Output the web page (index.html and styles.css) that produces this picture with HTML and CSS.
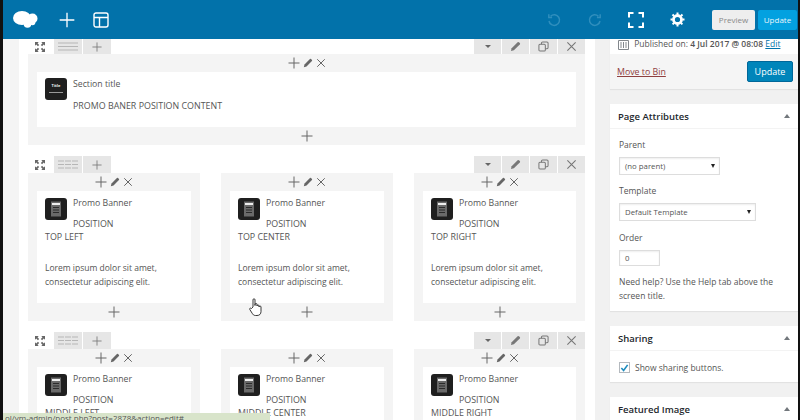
FILE: index.html
```html
<!DOCTYPE html>
<html lang="en">
<head>
    <meta charset="UTF-8">
    <title>Edit Page</title>
    <link rel="stylesheet" href="styles.css">
</head>
<body>
    <svg class="sprite" width="0" height="0">
        <symbol id="i-plus" viewBox="0 0 12 12"><path d="M6 .5v11M.5 6h11" fill="none" stroke="currentColor" stroke-width="1"/></symbol>
        <symbol id="i-close" viewBox="0 0 12 12"><path d="M1.500 1.500l9 9M10.500 1.500l-9 9" fill="none" stroke="currentColor" stroke-width="1.200"/></symbol>
        <symbol id="i-pencil" viewBox="0 0 12 12"><path d="M1 11l.8-3.200L8.300 1.300a1 1 0 0 1 1.400 0l1 1a1 1 0 0 1 0 1.400L4.200 10.200z" fill="currentColor"/></symbol>
        <symbol id="i-copy" viewBox="0 0 12 12"><g fill="none" stroke="currentColor" stroke-width="1.100"><rect x="1" y="3.500" width="7" height="7.500" rx="1.200"/><path d="M3.800 3.500V2.200A1.200 1.200 0 0 1 5 1h4.800A1.200 1.200 0 0 1 11 2.200v5A1.200 1.200 0 0 1 9.800 8.400H8"/></g></symbol>
        <symbol id="i-expand" viewBox="0 0 12 12"><g fill="currentColor"><path d="M0 0h4.500L3 1.500l2 2L3.500 5l-2-2L0 4.500zM12 0v4.500L10.500 3l-2 2L7 3.500l2-2L7.500 0zM0 12V7.500L1.500 9l2-2L5 8.500l-2 2L4.500 12zM12 12H7.500L9 10.500l-2-2L8.500 7l2 2L12 7.500z"/></g></symbol>
        <symbol id="i-promo" viewBox="0 0 22 22"><rect width="22" height="22" rx="3" fill="#1f1f1f"/><rect x="6" y="3.500" width="10" height="15" fill="#6a6a6a"/><rect x="7" y="5" width="8" height="2" fill="#eee"/><path d="M8 9.500h6M8 12h6M8 14.500h6" stroke="#2b2b2b" stroke-width="1"/></symbol>
    </svg>

    <div class="app">
        <!-- Top bar -->
        <header class="topbar">
            <svg class="logo" width="25" height="18" viewBox="0 0 25 18"><g fill="#fff"><ellipse cx="9" cy="7" rx="9" ry="7"/><circle cx="19.500" cy="7.500" r="5"/><circle cx="14.500" cy="13" r="3.800"/><circle cx="19.500" cy="11.500" r="2.800"/></g></svg>
            <svg class="bar-plus" width="16" height="16"><use href="#i-plus"/></svg>
            <svg class="bar-layout" width="16" height="16" viewBox="0 0 16 16"><g fill="none" stroke="#fff" stroke-width="1.400"><rect x="1" y="1" width="14" height="14" rx="2"/><path d="M1 5.500h14M6.500 5.500V15"/></g></svg>

            <svg class="bar-undo dim" width="14" height="14" viewBox="0 0 14 14"><path d="M3.600 3.200A5.300 5.300 0 1 1 2 8M1.800 1.200v3.300h3.300" fill="none" stroke="currentColor" stroke-width="1.500"/></svg>
            <svg class="bar-redo dim" width="14" height="14" viewBox="0 0 14 14"><path d="M10.400 3.200A5.300 5.300 0 1 0 12 8M12.200 1.200v3.300H8.900" fill="none" stroke="currentColor" stroke-width="1.500"/></svg>
            <svg class="bar-full" width="16" height="16" viewBox="0 0 16 16"><path d="M1 5.500V1h4.500M10.500 1H15v4.500M15 10.500V15h-4.500M5.500 15H1v-4.500" fill="none" stroke="#fff" stroke-width="2"/></svg>
            <svg class="bar-gear" width="15" height="15" viewBox="0 0 15 15"><circle cx="7.500" cy="7.500" r="4" fill="none" stroke="#fff" stroke-width="2.800"/><path d="M7.500 .5v14M.5 7.500h14M2.500 2.500l10 10M12.500 2.500l-10 10" stroke="#fff" stroke-width="2" stroke-dasharray="2.200 9.600"/></svg>
            <button class="btn-preview">Preview</button>
            <button class="btn-update">Update</button>
        </header>

        <div class="workspace">
            <div class="strip"></div>

            <!-- Builder -->
            <main class="builder">
                <section class="row row-first">
                    <div class="row-bar">
                        <svg class="row-expand" width="10" height="10"><use href="#i-expand"/></svg>
                        <span class="bar-btn">
                            <svg width="20" height="9" viewBox="0 0 20 9"><path d="M0 1h20M0 4.500h20M0 8h20" stroke="#aaa" stroke-width=".8"/></svg>
                        </span>
                        <span class="bar-btn"><svg width="10" height="10"><use href="#i-plus"/></svg></span>
                        <div class="row-tools">
                            <span class="bar-btn tool"><i class="caret"></i></span>
                            <span class="bar-btn tool"><svg><use href="#i-pencil"/></svg></span>
                            <span class="bar-btn tool"><svg><use href="#i-copy"/></svg></span>
                            <span class="bar-btn tool"><svg><use href="#i-close"/></svg></span>
                        </div>
                    </div>
                    <div class="block">
                        <div class="block-tools">
                            <svg width="12" height="12"><use href="#i-plus"/></svg>
                            <svg width="10" height="10"><use href="#i-pencil"/></svg>
                            <svg width="10" height="10"><use href="#i-close"/></svg>
                        </div>
                        <div class="card card-wide">
                            <div class="thumb-title"><span>Title</span></div>
                            <div class="card-title">Section title</div>
                            <div class="card-line">PROMO BANER POSITION CONTENT</div>
                        </div>
                        <div class="block-add"><svg width="12" height="12"><use href="#i-plus"/></svg></div>
                    </div>
                </section>

                <section class="row">
                    <div class="row-bar">
                        <svg class="row-expand" width="10" height="10"><use href="#i-expand"/></svg>
                        <span class="bar-btn">
                            <svg width="20" height="9" viewBox="0 0 20 9"><path d="M0 1h6M7 1h6M14 1h6M0 4.500h6M7 4.500h6M14 4.500h6M0 8h6M7 8h6M14 8h6" stroke="#aaa" stroke-width=".8"/></svg>
                        </span>
                        <span class="bar-btn"><svg width="10" height="10"><use href="#i-plus"/></svg></span>
                        <div class="row-tools">
                            <span class="bar-btn tool"><i class="caret"></i></span>
                            <span class="bar-btn tool"><svg><use href="#i-pencil"/></svg></span>
                            <span class="bar-btn tool"><svg><use href="#i-copy"/></svg></span>
                            <span class="bar-btn tool"><svg><use href="#i-close"/></svg></span>
                        </div>
                    </div>
                    <div class="cols">
                        <div class="block">
                            <div class="block-tools">
                                <svg width="12" height="12"><use href="#i-plus"/></svg>
                                <svg width="10" height="10"><use href="#i-pencil"/></svg>
                                <svg width="10" height="10"><use href="#i-close"/></svg>
                            </div>
                            <div class="card">
                                <svg class="thumb" width="22" height="22"><use href="#i-promo"/></svg>
                                <div class="card-title">Promo Banner</div>
                                <div class="card-line">POSITION<br>TOP LEFT</div>
                                <p class="card-text">Lorem ipsum dolor sit amet,<br>consectetur adipiscing elit.</p>
                            </div>
                            <div class="block-add"><svg width="12" height="12"><use href="#i-plus"/></svg></div>
                        </div>
                        <div class="block">
                            <div class="block-tools">
                                <svg width="12" height="12"><use href="#i-plus"/></svg>
                                <svg width="10" height="10"><use href="#i-pencil"/></svg>
                                <svg width="10" height="10"><use href="#i-close"/></svg>
                            </div>
                            <div class="card">
                                <svg class="thumb" width="22" height="22"><use href="#i-promo"/></svg>
                                <div class="card-title">Promo Banner</div>
                                <div class="card-line">POSITION<br>TOP CENTER</div>
                                <p class="card-text">Lorem ipsum dolor sit amet,<br>consectetur adipiscing elit.</p>
                            </div>
                            <div class="block-add"><svg width="12" height="12"><use href="#i-plus"/></svg></div>
                        </div>
                        <div class="block">
                            <div class="block-tools">
                                <svg width="12" height="12"><use href="#i-plus"/></svg>
                                <svg width="10" height="10"><use href="#i-pencil"/></svg>
                                <svg width="10" height="10"><use href="#i-close"/></svg>
                            </div>
                            <div class="card">
                                <svg class="thumb" width="22" height="22"><use href="#i-promo"/></svg>
                                <div class="card-title">Promo Banner</div>
                                <div class="card-line">POSITION<br>TOP RIGHT</div>
                                <p class="card-text">Lorem ipsum dolor sit amet,<br>consectetur adipiscing elit.</p>
                            </div>
                            <div class="block-add"><svg width="12" height="12"><use href="#i-plus"/></svg></div>
                        </div>
                    </div>
                </section>

                <section class="row">
                    <div class="row-bar">
                        <svg class="row-expand" width="10" height="10"><use href="#i-expand"/></svg>
                        <span class="bar-btn">
                            <svg width="20" height="9" viewBox="0 0 20 9"><path d="M0 1h6M7 1h6M14 1h6M0 4.500h6M7 4.500h6M14 4.500h6M0 8h6M7 8h6M14 8h6" stroke="#aaa" stroke-width=".8"/></svg>
                        </span>
                        <span class="bar-btn"><svg width="10" height="10"><use href="#i-plus"/></svg></span>
                        <div class="row-tools">
                            <span class="bar-btn tool"><i class="caret"></i></span>
                            <span class="bar-btn tool"><svg><use href="#i-pencil"/></svg></span>
                            <span class="bar-btn tool"><svg><use href="#i-copy"/></svg></span>
                            <span class="bar-btn tool"><svg><use href="#i-close"/></svg></span>
                        </div>
                    </div>
                    <div class="cols">
                        <div class="block">
                            <div class="block-tools">
                                <svg width="12" height="12"><use href="#i-plus"/></svg>
                                <svg width="10" height="10"><use href="#i-pencil"/></svg>
                                <svg width="10" height="10"><use href="#i-close"/></svg>
                            </div>
                            <div class="card">
                                <svg class="thumb" width="22" height="22"><use href="#i-promo"/></svg>
                                <div class="card-title">Promo Banner</div>
                                <div class="card-line">POSITION<br>MIDDLE LEFT</div>
                            </div>
                        </div>
                        <div class="block">
                            <div class="block-tools">
                                <svg width="12" height="12"><use href="#i-plus"/></svg>
                                <svg width="10" height="10"><use href="#i-pencil"/></svg>
                                <svg width="10" height="10"><use href="#i-close"/></svg>
                            </div>
                            <div class="card">
                                <svg class="thumb" width="22" height="22"><use href="#i-promo"/></svg>
                                <div class="card-title">Promo Banner</div>
                                <div class="card-line">POSITION<br>MIDDLE CENTER</div>
                            </div>
                        </div>
                        <div class="block">
                            <div class="block-tools">
                                <svg width="12" height="12"><use href="#i-plus"/></svg>
                                <svg width="10" height="10"><use href="#i-pencil"/></svg>
                                <svg width="10" height="10"><use href="#i-close"/></svg>
                            </div>
                            <div class="card">
                                <svg class="thumb" width="22" height="22"><use href="#i-promo"/></svg>
                                <div class="card-title">Promo Banner</div>
                                <div class="card-line">POSITION<br>MIDDLE RIGHT</div>
                            </div>
                        </div>
                    </div>
                </section>
            </main>

            <!-- Sidebar -->
            <aside class="sidebar">
                <div class="box box-publish">
                    <div class="published">
                        <svg width="11" height="11" viewBox="0 0 11 11"><path d="M.5 1.500h10v9H.5zM3 3v6M5.500 3v6M8 3v6" fill="none" stroke="#82878c" stroke-width="1"/></svg>
                        Published on: <b>4 Jul 2017 @ 08:08</b> <a href="#">Edit</a>
                    </div>
                    <div class="publish-actions">
                        <a href="#" class="bin">Move to Bin</a>
                        <button class="btn-primary">Update</button>
                    </div>
                </div>

                <div class="box box-attrs">
                    <h2 class="box-head">Page Attributes <i class="arrow"></i></h2>
                    <div class="box-body">
                        <label>Parent</label>
                        <div class="select select-parent">(no parent)<i class="sel-caret"></i></div>
                        <label>Template</label>
                        <div class="select select-template">Default Template<i class="sel-caret"></i></div>
                        <label>Order</label>
                        <div class="select select-order">0</div>
                        <p class="help">Need help? Use the Help tab above the screen title.</p>
                    </div>
                </div>

                <div class="box box-sharing">
                    <h2 class="box-head">Sharing <i class="arrow"></i></h2>
                    <div class="share-line">
                        <span class="check"><svg width="10" height="10" viewBox="0 0 10 10"><path d="M1.500 5l2.500 2.800L8.500 1.500" fill="none" stroke="#1e8cbe" stroke-width="1.800"/></svg></span>
                        Show sharing buttons.
                    </div>
                </div>

                <div class="box">
                    <h2 class="box-head">Featured Image <i class="arrow"></i></h2>
                </div>
            </aside>
        </div>
    </div>

    <!-- Hand cursor and link status -->
    <svg class="hand" width="13" height="19" viewBox="0 0 13 19"><path d="M4 9V1.800a1 1 0 0 1 2 0V7.500V6.500a1 1 0 0 1 2 0v1.500a1 1 0 0 1 2 0v1a1 1 0 0 1 2 0v4.500c0 2.500-1.500 4-4 4H6.500c-1.800 0-2.600-1-3.300-2.200L.8 11.500c-.6-1.200.9-2 1.700-1z" fill="#fff" stroke="#222" stroke-width=".9"/></svg>
    <div class="status">ol/vm-admin/post.php?post=2878&amp;action=edit#</div>
</body>
</html>
```

FILE: styles.css
```css
* {
    margin: 0;
    padding: 0;
    box-sizing: border-box;
}
html, body {
    height: 420px;
    overflow: hidden;
}
body {
    background-color: #111;
    font-family: "Open Sans", Arial, sans-serif;
    font-size: 8.5px;
    color: #555;
}
.sprite {
    display: block;
    height: 0;
}
.app {
    margin: 0 2px 0 3px;
    height: 420px;
    background-color: #fff;
}
/* Top bar */
.topbar {
    height: 39px;
    background-color: #0272aa;
    display: flex;
    align-items: center;
    color: #fff;
}
.logo { margin-left: 10px; }
.bar-plus { margin-left: 21px; }
.bar-layout { margin-left: 18px; }
.bar-undo { margin-left: 438px; }
.bar-redo { margin-left: 27px; }
.bar-full { margin-left: 26px; }
.bar-gear { margin-left: 26px; }
.dim { color: #2f8ebd; }
.topbar button {
    height: 20px;
    border: none;
    border-radius: 2px;
    font-family: inherit;
    font-size: 8px;
}
.btn-preview {
    width: 43px;
    margin-left: 27px;
    background-color: #eee;
    color: #888;
}
.btn-update {
    width: 39px;
    margin-left: 3px;
    background-color: #03a1e0;
    color: #e8f6fc;
}
/* Layout */
.workspace {
    display: flex;
    height: 381px;
}
.strip {
    width: 16px;
    background-color: #f4f4f4;
}
.builder {
    width: 576px;
    padding: 0 10px 0 9px;
}
.sidebar {
    flex: 1;
    padding-left: 15px;
    background-color: #f1f1f1;
}
/* Builder rows */
.row {
    margin-bottom: 11px;
}
.row-bar {
    display: flex;
    height: 17px;
    align-items: stretch;
    gap: 1px;
    color: #777;
}
.row-first .row-bar {
    height: 15px;
}
.row-expand {
    align-self: center;
    margin: 0 8px 0 7px;
    color: #666;
}
.bar-btn {
    width: 28px;
    background-color: #e6e6e6;
    display: flex;
    align-items: center;
    justify-content: center;
}
.row-tools {
    margin-left: auto;
    display: flex;
    gap: 1px;
}
.tool {
    width: 27px;
}
.tool svg {
    width: 11px;
    height: 11px;
}
.caret {
    border-top: 3px solid #666;
    border-left: 3px solid transparent;
    border-right: 3px solid transparent;
}
.cols {
    display: grid;
    grid-template-columns: 172px 172px 171px;
    gap: 21px;
}
.block {
    background-color: #f4f4f4;
    padding: 0 9px;
}
.block-tools, .block-add {
    height: 18px;
    display: flex;
    align-items: center;
    justify-content: center;
    gap: 3px;
    color: #666;
}
.card {
    background-color: #fff;
    padding: 7px 8px 0;
    height: 112px;
    line-height: 13px;
}
.card-wide {
    height: 55px;
    padding-top: 6px;
}
.card-line {
    font-size: 8.900px;
}
.thumb, .thumb-title {
    float: left;
    margin-right: 6px;
}
.thumb-title {
    width: 22px;
    height: 22px;
    border-radius: 3px;
    background-color: #1f1f1f;
    color: #eee;
    font-size: 4px;
    font-weight: 700;
    line-height: 16px;
    text-align: center;
}
.thumb-title span {
    display: block;
    height: 15px;
    margin: 0 4px;
    border-bottom: 1px solid #999;
}
.card-title {
    color: #555;
    font-size: 8.700px;
    height: 20px;
}
.cols .card-title {
    margin-top: -1px;
}
.card-wide .card-line {
    margin-top: 1px;
}
.card-text {
    margin-top: 18px;
    line-height: 14px;
}
/* Sidebar boxes */
.box {
    background-color: #fff;
    margin-bottom: 15px;
    box-shadow: 0 1px 1px rgba(0, 0, 0, 0.06);
}
.box-publish {
    height: 50px;
}
.published {
    height: 15px;
    padding-left: 8px;
    line-height: 4px;
    white-space: nowrap;
    overflow: hidden;
}
.published svg {
    vertical-align: -3px;
    margin-right: 3px;
}
.published b {
    font-weight: 600;
}
.published a {
    color: #0073aa;
}
.publish-actions {
    height: 35px;
    background-color: #f5f5f5;
    display: flex;
    align-items: center;
    justify-content: space-between;
    padding: 0 5px 0 7px;
}
.bin {
    color: #8f4040;
    font-size: 8.800px;
}
.btn-primary {
    width: 46px;
    height: 21px;
    background-color: #0085ba;
    border: 1px solid #006799;
    border-radius: 2px;
    color: #fff;
    font-family: inherit;
    font-size: 9px;
}
.box-attrs {
    height: 207px;
}
.box-sharing {
    height: 56px;
}
.box-head {
    height: 25px;
    padding: 0 8px;
    display: flex;
    align-items: center;
    justify-content: space-between;
    font-size: 9.500px;
    font-weight: 600;
    color: #23282d;
    border-bottom: 1px solid #f3f3f3;
}
.arrow {
    border-bottom: 4px solid #72777c;
    border-left: 3px solid transparent;
    border-right: 3px solid transparent;
}
.box-body {
    padding: 9px 8px 0 9px;
}
.box-body label {
    display: block;
    height: 14px;
    line-height: 14px;
    margin-bottom: 5px;
}
.select {
    height: 18px;
    padding: 0 5px;
    margin-bottom: 9px;
    border: 1px solid #ddd;
    box-shadow: inset 0 1px 2px rgba(0, 0, 0, 0.07);
    font-size: 7.800px;
    line-height: 16px;
    position: relative;
}
.select-parent { width: 101px; }
.select-template { width: 137px; margin-bottom: 10px; }
.select-order { width: 41px; height: 16px; line-height: 14px; }
.sel-caret {
    position: absolute;
    right: 4px;
    top: 6px;
    border-top: 4px solid #222;
    border-left: 2.500px solid transparent;
    border-right: 2.500px solid transparent;
}
.help {
    line-height: 14px;
}
.share-line {
    display: flex;
    align-items: center;
    gap: 5px;
    padding: 11px 9px;
}
.check {
    width: 11px;
    height: 11px;
    border: 1px solid #b4b9be;
    display: flex;
}
/* Overlays */
.hand {
    position: absolute;
    left: 249px;
    top: 298px;
}
.status {
    position: absolute;
    left: 3px;
    top: 413px;
    width: 267px;
    height: 7px;
    background-color: #d8e4ca;
    color: #555;
    font-size: 8px;
    line-height: 10px;
    padding-left: 2px;
    overflow: hidden;
}
```
